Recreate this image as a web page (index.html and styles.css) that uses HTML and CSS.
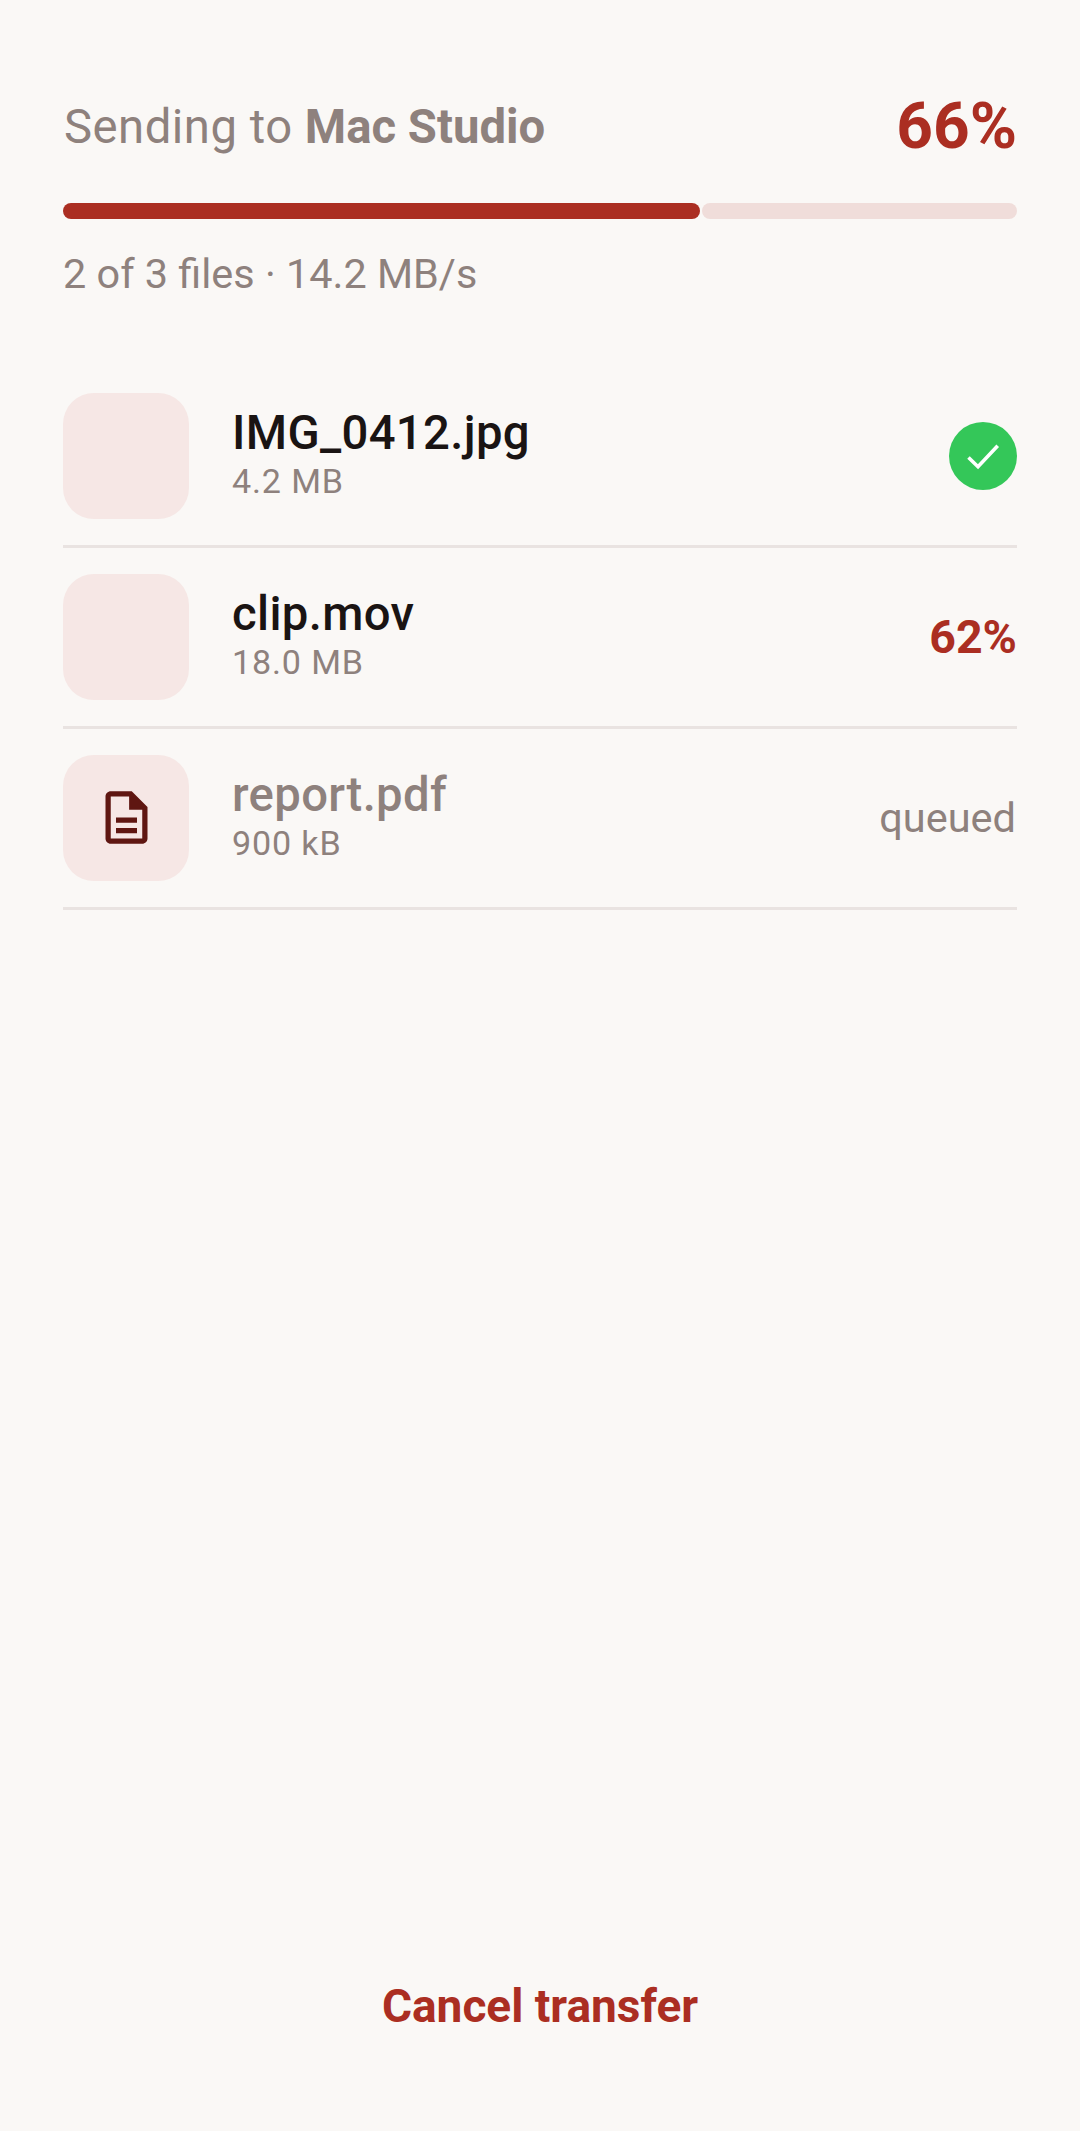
FILE: index.html
```html
<!DOCTYPE html>
<html lang="en">
<head>
<meta charset="utf-8">
<title>Sending to Mac Studio</title>
<link rel="stylesheet" href="styles.css">
</head>
<body>
<main class="screen">
  <header class="head">
    <div class="title">Sending to <b>Mac Studio</b></div>
    <div class="percent">66%</div>
  </header>
  <div class="bar">
    <div class="bar-fill"></div>
    <div class="bar-track"></div>
  </div>
  <div class="summary">2 of 3 files · 14.2 MB/s</div>
  <ul class="files">
    <li class="file">
      <div class="tile"></div>
      <div class="info">
        <div class="name">IMG_0412.jpg</div>
        <div class="size">4.2 MB</div>
      </div>
      <svg class="done" viewBox="0 0 68 68" aria-hidden="true">
        <circle cx="34" cy="34" r="34" fill="#34c759"/>
        <path d="M19.5 35.5 29 44.7 48.7 23.7" fill="none" stroke="#fff" stroke-width="3.6"/>
      </svg>
    </li>
    <li class="file">
      <div class="tile"></div>
      <div class="info">
        <div class="name">clip.mov</div>
        <div class="size">18.0 MB</div>
      </div>
      <div class="file-percent">62%</div>
    </li>
    <li class="file queued">
      <div class="tile">
        <svg class="doc" viewBox="0 0 24 24" aria-hidden="true">
          <path fill="#5f1611" d="M8 16h8v2H8zm0-4h8v2H8zm6-10H6c-1.1 0-2 .9-2 2v16c0 1.1.89 2 1.99 2H18c1.1 0 2-.9 2-2V8l-6-6zm4 18H6V4h7v5h5v11z"/>
        </svg>
      </div>
      <div class="info">
        <div class="name">report.pdf</div>
        <div class="size">900 kB</div>
      </div>
      <div class="status">queued</div>
    </li>
  </ul>
  <button class="cancel" type="button">Cancel transfer</button>
</main>
</body>
</html>
```
FILE: styles.css
```css
* { box-sizing: border-box; }
html, body { margin: 0; padding: 0; }
body {
  background: #faf8f6;
  font-family: Roboto, "Noto Sans", sans-serif;
}
.screen {
  height: 2131px;
  padding: 92px 63px 0;
  display: flex;
  flex-direction: column;
}
.head {
  display: flex;
  justify-content: space-between;
  align-items: center;
  height: 68px;
}
.title {
  font-size: 47.25px;
  letter-spacing: 0.5px;
  padding: 2px 0 0 1px;
  color: #8e817d;
}
.title b { font-weight: 700; letter-spacing: 0; }
.percent {
  font-size: 64px;
  font-weight: 700;
  color: #ab2e22;
}
.bar {
  display: flex;
  gap: 2px;
  height: 16px;
  margin-top: 43px;
}
.bar-fill {
  width: 637px;
  background: #ab2e22;
  border-radius: 8px;
}
.bar-track {
  flex: 1;
  background: #f0ddda;
  border-radius: 8px;
}
.summary {
  margin-top: 31px;
  font-size: 41.4px;
  line-height: 48px;
  color: #8e817d;
}
.files {
  list-style: none;
  margin: 69px 0 0;
  padding: 0;
}
.file {
  display: flex;
  align-items: center;
  height: 181px;
  padding-bottom: 1px;
  border-bottom: 3px solid #e9e3e1;
}
.tile {
  width: 126px;
  height: 126px;
  flex: none;
  border-radius: 31px;
  background: #f6e7e5;
  display: flex;
  align-items: center;
  justify-content: center;
}
.doc { width: 63px; height: 63px; }
.info {
  flex: 1;
  margin-left: 43px;
  padding-bottom: 3px;
}
.name {
  font-size: 47.25px;
  line-height: 50px;
  font-weight: 500;
  letter-spacing: 0.35px;
  color: #1a1413;
}
.queued .name { color: #8e817d; }
.size {
  margin-top: 3px;
  font-size: 34.1px;
  line-height: 40px;
  letter-spacing: 0.85px;
  color: #8e817d;
}
.done { width: 68px; height: 68px; flex: none; }
.file-percent {
  font-size: 46.5px;
  font-weight: 700;
  color: #ab2e22;
}
.status {
  margin-right: 1px;
  font-size: 41.5px;
  color: #8e817d;
}
.cancel {
  margin-top: auto;
  margin-bottom: 97px;
  align-self: center;
  border: 0;
  padding: 0;
  background: none;
  font-family: inherit;
  font-size: 46px;
  line-height: 56px;
  font-weight: 700;
  color: #ab2e22;
}
```
